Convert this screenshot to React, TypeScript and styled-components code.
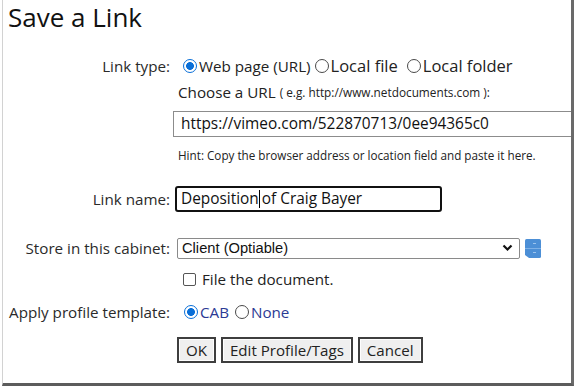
import React from 'react';
import styled, { createGlobalStyle } from 'styled-components';

const Global = createGlobalStyle`
  html, body { margin: 0; padding: 0; background: #fff; }
  body { font-family: "Open Sans", "Liberation Sans", sans-serif; color: #222; }
`;

const Frame = styled.div`
  margin-left: 2px;
  width: 568px;
  height: 383px;
  border-left: 1px solid #d2d2d2;
  border-right: 3px solid #6a6a6a;
  border-bottom: 3px solid #5c5c5c;
  overflow: hidden;
  display: flex;
  flex-direction: column;
`;

const Title = styled.h1`
  margin: 0;
  padding-left: 5px;
  font-size: 26px;
  line-height: 34px;
  font-weight: 400;
  color: #111;
`;

const Row = styled.div<{ $top: number; $h?: number }>`
  display: grid;
  grid-template-columns: 167px 1fr;
  column-gap: 3px;
  align-items: center;
  margin-top: ${p => p.$top}px;
  min-height: ${p => p.$h ?? 22}px;
`;

const Label = styled.div`
  text-align: right;
  font-size: 15.2px;
  line-height: 22px;
  color: #2a2a2a;
  white-space: nowrap;
`;

const Cell = styled.div<{ $indent?: number }>`
  display: flex;
  align-items: center;
  padding-left: ${p => p.$indent ?? 0}px;
  font-size: 15.2px;
  line-height: 22px;
  white-space: nowrap;
  min-width: 0;
`;

const Option = styled.label<{ $gapAfter?: number }>`
  display: inline-flex;
  align-items: center;
  margin-right: ${p => p.$gapAfter ?? 5}px;
`;

const RadioMark = styled.span<{ $checked?: boolean }>`
  box-sizing: border-box;
  width: 14px;
  height: 14px;
  border-radius: 50%;
  margin-right: 2px;
  border: ${p => (p.$checked ? '1.5px solid #0a6fd8' : '1px solid #4a4a4a')};
  background: ${p =>
    p.$checked ? 'radial-gradient(circle, #0a6fd8 0 3.6px, #fff 4.2px)' : '#fff'};
`;

const OptionText = styled.span<{ $blue?: boolean; $size?: number }>`
  color: ${p => (p.$blue ? '#2b3a94' : '#222')};
  font-size: ${p => p.$size ?? 15.2}px;
`;

const Small = styled.span`
  font-size: 11.8px;
  margin-left: 4px;
`;

const UrlField = styled.div`
  box-sizing: border-box;
  width: 440px;
  height: 26px;
  border: 1px solid #8c8c8c;
  border-right: none;
  padding-left: 7px;
  font-size: 15.4px;
  line-height: 24px;
  color: #111;
`;

const Hint = styled.div`
  padding-left: 5px;
  font-size: 11.7px;
  line-height: 14px;
  color: #222;
`;

const NameField = styled.div`
  box-sizing: border-box;
  margin-left: 2px;
  width: 267px;
  height: 26px;
  border: 2px solid #111;
  border-radius: 3px;
  padding-left: 4px;
  font-size: 15.4px;
  line-height: 22px;
  color: #111;
  display: flex;
  align-items: center;
`;

const Caret = styled.span`
  display: inline-block;
  width: 1px;
  height: 18px;
  background: #000;
  margin-right: 2px;
`;

const Select = styled.div`
  box-sizing: border-box;
  margin-left: 4px;
  width: 343px;
  height: 21px;
  border: 1px solid #8a8a8a;
  border-radius: 2px;
  padding: 0 6px 0 4px;
  display: flex;
  align-items: center;
  justify-content: space-between;
  font-family: "Liberation Sans", Arial, sans-serif;
  font-size: 14.7px;
  color: #111;
`;

const Cabinet = styled.svg`
  margin-left: 5px;
  display: block;
`;

const CheckBox = styled.span`
  box-sizing: border-box;
  width: 13px;
  height: 13px;
  border: 1px solid #555;
  border-radius: 2px;
  margin-right: 6px;
  background: #fff;
`;

const Buttons = styled.div`
  display: flex;
  gap: 5px;
  padding-left: 4px;
`;

const Button = styled.button`
  box-sizing: border-box;
  height: 26px;
  padding: 0 7px;
  border: 2px solid #3e3e3e;
  box-shadow: inset 0 0 0 1px #fdfdfd;
  background: #efefef;
  font-family: "Open Sans", sans-serif;
  font-size: 15.1px;
  line-height: 20px;
  color: #222;
`;

const Radio = ({
  checked,
  text,
  blue,
  gap,
  size,
}: {
  checked?: boolean;
  text: string;
  blue?: boolean;
  gap?: number;
  size?: number;
}) => (
  <Option $gapAfter={gap}>
    <RadioMark $checked={checked} />
    <OptionText $blue={blue} $size={size}>
      {text}
    </OptionText>
  </Option>
);

export default function App() {
  return (
    <>
      <Global />
      <Frame>
        <Title>Save a Link</Title>
        <Row $top={21}>
          <Label>Link type:</Label>
          <Cell $indent={10}>
            <Radio checked text="Web page (URL)" gap={4} />
            <Radio text="Local file" gap={9} size={16.5} />
            <Radio text="Local folder" size={16.5} />
          </Cell>
        </Row>
        <Row $top={4}>
          <div />
          <Cell $indent={5}>
            Choose a URL<Small>( e.g. http://www.netdocuments.com ):</Small>
          </Cell>
        </Row>
        <Row $top={8} $h={26}>
          <div />
          <Cell>
            <UrlField>https://vimeo.com/522870713/0ee94365c0</UrlField>
          </Cell>
        </Row>
        <Row $top={11} $h={14}>
          <div />
          <Hint>Hint: Copy the browser address or location field and paste it here.</Hint>
        </Row>
        <Row $top={24} $h={26}>
          <Label>Link name:</Label>
          <Cell>
            <NameField>
              Deposition<Caret />of Craig Bayer
            </NameField>
          </Cell>
        </Row>
        <Row $top={25} $h={21}>
          <Label>Store in this cabinet:</Label>
          <Cell>
            <Select>
              <span>Client (Optiable)</span>
              <svg width="11" height="8" viewBox="0 0 11 8">
                <path d="M1.5 1.5 L5.5 5.5 L9.5 1.5" fill="none" stroke="#111" strokeWidth="2.2" />
              </svg>
            </Select>
            <Cabinet width="16" height="19" viewBox="0 0 16 19">
              <path d="M1.5 0 H14.5 Q16 0 16 1.5 V17.5 Q16 19 14.5 19 H4 L0 16 V1.5 Q0 0 1.5 0 Z" fill="#4c8fd6" />
              <rect x="0" y="9" width="16" height="1" fill="#7fb1e6" />
              <rect x="8" y="4" width="3" height="1" fill="#9cc4ee" />
              <rect x="8" y="13" width="3" height="1" fill="#9cc4ee" />
            </Cabinet>
          </Cell>
        </Row>
        <Row $top={9}>
          <div />
          <Cell $indent={10}>
            <CheckBox />
            File the document.
          </Cell>
        </Row>
        <Row $top={11}>
          <Label>Apply profile template:</Label>
          <Cell $indent={11}>
            <Radio checked blue text="CAB" gap={6} />
            <Radio blue text="None" />
          </Cell>
        </Row>
        <Row $top={14} $h={26}>
          <div />
          <Buttons>
            <Button>OK</Button>
            <Button>Edit Profile/Tags</Button>
            <Button>Cancel</Button>
          </Buttons>
        </Row>
      </Frame>
    </>
  );
}
